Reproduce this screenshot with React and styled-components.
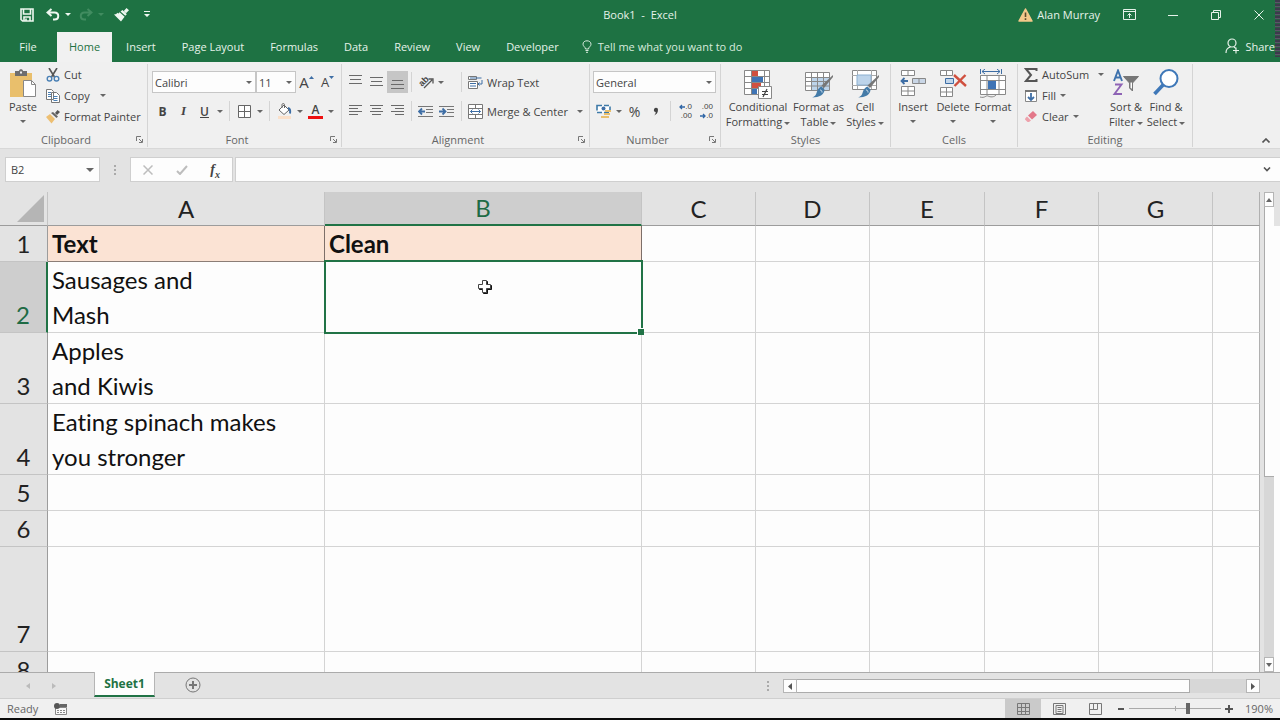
import { useState } from "react";
import styled, { createGlobalStyle } from "styled-components";


const App = () => {

    const [tab, setTab] = useState("Home");
    const [zoom, setZoom] = useState(190);

    return (
        <>
            <GlobalStyle />
            <Window>
                <Top>
                    <TitleBar />
                    <Tabs tab={tab} setTab={setTab} />
                </Top>
                <Ribbon />
                <FormulaBar />
                <Sheet />
                <SheetTabs />
                <StatusBar zoom={zoom} setZoom={setZoom} />
            </Window>
        </>
    )
}

// ---------- title and tabs ----------

const TitleBar = () => (
    <Title>
        <QuickAccess>
            <QuickButton aria-label="Save" $w={28}>
                <svg width="14" height="14" viewBox="0 0 14 14" fill="none" stroke="#eef7f0" strokeWidth="1.6">
                    <path d="M1 1h12v12H2.6L1 11.4zM3.5 1v5h7V1M4 13V9h6v4M6 10.5v2" />
                </svg>
            </QuickButton>
            <QuickButton aria-label="Undo" $w={34}>
                <svg width="14" height="13" viewBox="0 0 14 13" fill="none" stroke="#eef7f0" strokeWidth="2">
                    <path d="M5.5 1L1.5 4.5l4 3.5M2 4.500h6.500c5 0 5 7 0 7H7" />
                </svg>
                <Caret $color="#eef7f0" $gap={5} />
            </QuickButton>
            <QuickButton aria-label="Redo" $w={32} disabled>
                <svg width="14" height="13" viewBox="0 0 14 13" fill="none" stroke="#418c60" strokeWidth="2">
                    <path d="M8.500 1l4 3.500-4 3.500M12 4.500H5.500c-5 0-5 7 0 7H7" />
                </svg>
                <Caret $color="#418c60" $gap={5} />
            </QuickButton>
            <QuickButton aria-label="Format Painter" $w={28}>
                <svg width="15" height="14" viewBox="0 0 15 14" fill="#eef7f0">
                    <path d="M12.500 0L15 2.200l-3 3L9.800 3zM8.500 2l4.300 4.200-1.500 1.500L6.500 3.500zM5.600 4.300l5 4.500L7 13.500 0 6.500l2.500-.5.5-1.200 1.500.6z" />
                </svg>
            </QuickButton>
            <QuickButton aria-label="Customize Quick Access Toolbar" $w={24}>
                <svg width="6" height="7" viewBox="0 0 6 7" fill="#eef7f0"><path d="M0 0h6v1H0zM0 3h6L3 6z" /></svg>
            </QuickButton>
        </QuickAccess>
        <BookName>Book1&nbsp; -&nbsp; Excel</BookName>
        <TitleRight>
            <User>
                <svg width="15" height="14" viewBox="0 0 15 14">
                    <path d="M7.500 1L14 13H1z" fill="#f3c98b" stroke="#f3c98b" strokeWidth="1.500" strokeLinejoin="round" />
                    <path d="M7.500 4.500v4.500M7.500 10.300v1.700" stroke="#5b4a2b" strokeWidth="1.600" />
                </svg>
                Alan Murray
            </User>
            <WindowButton aria-label="Ribbon Display Options">
                <svg width="13" height="11" viewBox="0 0 13 11" fill="none" stroke="#e6f2ea">
                    <path d="M.5.5h12v10H.5zM.5 2.500h12M6.500 9V4.500M4.500 6.500l2-2 2 2" />
                </svg>
            </WindowButton>
            <WindowButton aria-label="Minimize">
                <svg width="10" height="10" viewBox="0 0 10 10" stroke="#e6f2ea"><path d="M0 5.500h10" /></svg>
            </WindowButton>
            <WindowButton aria-label="Restore">
                <svg width="10" height="10" viewBox="0 0 10 10" fill="none" stroke="#e6f2ea">
                    <path d="M.5 2.500h7v7h-7zM2.500 2.500v-2h7v7h-2" />
                </svg>
            </WindowButton>
            <WindowButton aria-label="Close">
                <svg width="10" height="10" viewBox="0 0 10 10" stroke="#e6f2ea"><path d="M.5.5l9 9M9.500.5l-9 9" /></svg>
            </WindowButton>
        </TitleRight>
    </Title>
)

const tabNames = ["File", "Home", "Insert", "Page Layout", "Formulas", "Data", "Review", "View", "Developer"];

const Tabs = ({ tab, setTab }) => (
    <TabBar>
        {tabNames.map((name) => (
            <TabButton key={name} $on={tab === name} $file={name === "File"} onClick={() => setTab(name)}>{name}</TabButton>
        ))}
        <TellMe>
            <svg width="10" height="13" viewBox="0 0 10 13" fill="none" stroke="#d8ebde">
                <path d="M3.500 9C3.500 7 1 6.500 1 4.200 1 2 2.800.8 5 .8s4 1.200 4 3.400C9 6.500 6.500 7 6.500 9zM3.500 10.500h3M4 12.300h2" />
            </svg>
            Tell me what you want to do
        </TellMe>
        <Share>
            <svg width="15" height="16" viewBox="0 0 15 16" fill="none" stroke="#e6f2ea" strokeWidth="1.200">
                <circle cx="7" cy="5" r="4" /><path d="M1 15c0-3.500 2-5.500 4.500-6M9 9l2 1.500M11 9.500v6M8 12.500h6" />
            </svg>
            Share
        </Share>
    </TabBar>
)

// ---------- ribbon ----------

const Ribbon = () => (
    <RibbonBar>
        <Group name="Clipboard" width={148} launcher pad={3}>
            <BigButton $w={40}>
                <svg width="28" height="30" viewBox="0 0 28 30">
                    <path d="M1 4h22v24H1z" fill="#e9bf6c" />
                    <path d="M6 2h4c0-2.500 4-2.500 4 0h4v5H6z" fill="#6e6e6e" /><path d="M11 2.500h2v2h-2z" fill="#eee" />
                    <path d="M14.500 11.500h8l4 4v12h-12z" fill="#fff" stroke="#888" /><path d="M22.500 11.500v4h4" fill="none" stroke="#888" />
                </svg>
                <span>Paste</span>
                <Caret />
            </BigButton>
            <Stack>
                <SmallButton>
                    <svg width="14" height="14" viewBox="0 0 14 14" fill="none">
                        <path d="M3 0l5.500 9M11 0L5.500 9" stroke="#555" strokeWidth="1.600" />
                        <circle cx="3.500" cy="10.700" r="2.300" stroke="#4a80b5" strokeWidth="1.400" /><circle cx="10.500" cy="10.700" r="2.300" stroke="#4a80b5" strokeWidth="1.400" />
                    </svg>
                    Cut
                </SmallButton>
                <SmallButton>
                    <svg width="14" height="14" viewBox="0 0 14 14" fill="#fff" stroke="#777">
                        <path d="M.5.500h5l2 2v8h-7zM5.500 3.500h5l3 3v7h-8z" />
                        <path d="M2 3.500h3M2 5.500h3M2 7.500h3M7.500 7.500h4M7.500 9.500h4M7.500 11.500h4" stroke="#4a80b5" />
                    </svg>
                    Copy
                    <Caret $gap={6} />
                </SmallButton>
                <SmallButton>
                    <svg width="14" height="14" viewBox="0 0 14 14">
                        <path d="M4 4l5 5-3.500 4.500L0 7z" fill="#edbf72" /><path d="M5 3l5.500 5L12 6.500 7 2z" fill="#666" /><path d="M11.500 0L14 2l-3 3-2-2z" fill="#555" />
                    </svg>
                    Format Painter
                </SmallButton>
            </Stack>
        </Group>

        <Group name="Font" width={194} launcher pad={4}>
            <Rows>
                <Row>
                    <Combo label="Font" value="Calibri" width={104} />
                    <Combo label="Font Size" value="11" width={40} />
                    <Tool aria-label="Increase Font Size"><FontSize $size={15}>A</FontSize><svg width="5" height="12" viewBox="0 0 5 12"><path d="M0 3l2.500-3L5 3z" fill="#3e6ea5" /></svg></Tool>
                    <Tool aria-label="Decrease Font Size"><FontSize $size={13}>A</FontSize><svg width="5" height="12" viewBox="0 0 5 12"><path d="M0 0h5L2.500 3z" fill="#3e6ea5" /></svg></Tool>
                </Row>
                <Row>
                    <Tool><b>B</b></Tool>
                    <Tool><Italic>I</Italic></Tool>
                    <Tool><Underlined>U</Underlined></Tool>
                    <Drop />
                    <Divider />
                    <Tool aria-label="Borders">
                        <svg width="13" height="13" viewBox="0 0 13 13" fill="#fff" stroke="#666"><path d="M.5.5h12v12H.5zM6.500.5v12M.5 6.500h12" /></svg>
                    </Tool>
                    <Drop />
                    <Divider />
                    <Tool aria-label="Fill Color">
                        <svg width="15" height="16" viewBox="0 0 15 16">
                            <path d="M2 7l5-5 5 5-5 4.500z" fill="#fff" stroke="#666" /><path d="M5 5V1.500C5 .3 7.500.3 7.500 1.500V5" fill="none" stroke="#666" />
                            <path d="M11 5c2.500.5 2.500 2.500 2 5.500" fill="none" stroke="#3e6ea5" strokeWidth="2" /><path d="M1 13h13v3H1z" fill="#fbe0c9" />
                        </svg>
                    </Tool>
                    <Drop />
                    <Tool aria-label="Font Color"><FontColor>A</FontColor></Tool>
                    <Drop />
                </Row>
            </Rows>
        </Group>

        <Group name="Alignment" width={248} launcher pad={3}>
            <Rows>
                <Row>
                    <Tool aria-label="Top Align"><Lines at={[1, 5, 9]} inset={[0, 1, 0]} /></Tool>
                    <Tool aria-label="Middle Align"><Lines at={[3, 7, 11]} inset={[0, 1, 0]} /></Tool>
                    <Tool aria-label="Bottom Align" $active><Lines at={[6, 10, 14]} inset={[1, 0, 0]} /></Tool>
                    <Divider $gap={3} />
                    <Cluster>
                        <Tool aria-label="Orientation">
                            <svg width="20" height="20" viewBox="0 0 20 20">
                                <text x="3" y="12" fontSize="9" fontWeight="600" fill="#444" fontFamily="Liberation Sans, sans-serif" transform="rotate(-45 8 10)">ab</text>
                                <path d="M8 16l8-8M12.500 7H17v4.500" fill="none" stroke="#555" strokeWidth="1.300" />
                            </svg>
                        </Tool>
                        <Drop />
                    </Cluster>
                    <Divider $gap={3} />
                    <SmallButton>
                        <svg width="15" height="15" viewBox="0 0 15 15" fill="none" stroke="#777">
                            <path d="M.5 1.500h8v3h-8zM.5 6.500h9v7h-9z" fill="#fff" />
                            <path d="M2 3h11.500M2 8.500h6M2 11h6" stroke="#3e6ea5" /><path d="M14 5v4h-4M11.500 7.500L10 9l1.500 1.500" stroke="#3e6ea5" />
                        </svg>
                        Wrap Text
                    </SmallButton>
                </Row>
                <Row>
                    <Tool aria-label="Align Left"><Lines at={[2, 5, 8, 11]} inset={[0, 0, 0, 0]} cut={[0, 4, 0, 4]} /></Tool>
                    <Tool aria-label="Center"><Lines at={[2, 5, 8, 11]} inset={[0, 2, 0, 2]} /></Tool>
                    <Tool aria-label="Align Right"><Lines at={[2, 5, 8, 11]} inset={[0, 4, 0, 4]} cut={[0, 0, 0, 0]} /></Tool>
                    <Divider $gap={3} />
                    <Cluster>
                        <Tool aria-label="Decrease Indent"><Indent d="M7 6.500H1M4 3.500l-3 3 3 3" /></Tool>
                        <Tool aria-label="Increase Indent"><Indent d="M0 6.500h6M3.500 3.500l3 3-3 3" /></Tool>
                    </Cluster>
                    <Divider $gap={3} />
                    <SmallButton>
                        <svg width="15" height="15" viewBox="0 0 15 15" fill="none" stroke="#777">
                            <path d="M.5.5h14v14H.5zM.5 4.500h14M.5 10.500h14M7.500.5v4M7.500 10.500v4" fill="#fff" />
                            <path d="M2.500 7.500h10M4.500 5.500l-2 2 2 2M10.500 5.500l2 2-2 2" stroke="#3e6ea5" />
                        </svg>
                        Merge &amp; Center
                        <Caret $gap={5} />
                    </SmallButton>
                </Row>
            </Rows>
        </Group>

        <Group name="Number" width={131} launcher pad={3}>
            <Rows>
                <Row><Combo label="Number Format" value="General" width={123} /></Row>
                <Row>
                    <Tool aria-label="Accounting Number Format">
                        <svg width="16" height="15" viewBox="0 0 16 15">
                            <path d="M1 1.500h13v7H1z" fill="#fff" stroke="#3e7aa8" strokeWidth="1.600" strokeDasharray="5 2" /><circle cx="7.500" cy="4.500" r="2" fill="#3e6ea5" />
                            <path d="M9 6h6v2H9zM8 9h6v2H8zM5 12h8v2H5z" fill="#e9bf6c" />
                        </svg>
                    </Tool>
                    <Drop />
                    <Tool aria-label="Percent Style"><Symbol>%</Symbol></Tool>
                    <Tool aria-label="Comma Style">
                        <svg width="6" height="9" viewBox="0 0 6 9"><path d="M1 2.500a2 2 0 1 1 4 .3C5 6 3.500 7.500 1 8.500c1.300-1.200 1.700-2.200 1.700-3.500A2 2 0 0 1 1 2.500z" fill="#444" /></svg>
                    </Tool>
                    <Divider />
                    <Tool aria-label="Increase Decimal">
                        <Decimal><span><SmallArrow d="M6 3H1M3 1L1 3l2 2" />.0</span><span>.00</span></Decimal>
                    </Tool>
                    <Tool aria-label="Decrease Decimal">
                        <Decimal><span>.00</span><span><SmallArrow d="M0 3h5M3 1l2 2-2 2" />.0</span></Decimal>
                    </Tool>
                </Row>
            </Rows>
        </Group>

        <Group name="Styles" width={170} pad={3}>
            <BigButton $w={68}>
                <svg width="30" height="30" viewBox="0 0 30 30">
                    <path d="M1.500 1.500h25v24h-25z" fill="#fff" /><path d="M9 1h6v6H9zM9 14h9v5H9z" fill="#d0503f" /><path d="M9 7h11v6H9zM9 20h5v5H9z" fill="#3f74b5" />
                    <path d="M1.500 1.500h25v24h-25zM8.500 1.500v24M21.500 1.500v24M1.500 7.500h25M1.500 13.500h25M1.500 19.500h25" fill="none" stroke="#888" />
                    <path d="M15.500 17.500h13v12h-13z" fill="#fff" stroke="#888" /><path d="M19 22.500h6M19 25.500h6M24 20l-4 8" stroke="#444" strokeWidth="1.200" />
                </svg>
                <span>Conditional</span>
                <span>Formatting<Caret $gap={2} /></span>
            </BigButton>
            <BigButton $w={53}>
                <svg width="30" height="30" viewBox="0 0 30 30">
                    <path d="M1.500 3.500h24v18h-24z" fill="#fff" stroke="#888" /><path d="M8 8h17v13H8z" fill="#bdd4ea" />
                    <path d="M7.500 3v18M13.500 3v18M19.500 3v18M2 8.500h23M2 12.500h23M2 17h23" stroke="#888" />
                    <Brush />
                </svg>
                <span>Format as</span>
                <span>Table<Caret $gap={2} /></span>
            </BigButton>
            <BigButton $w={40}>
                <svg width="30" height="30" viewBox="0 0 30 30">
                    <path d="M2.500 1.500h24v19h-24z" fill="#fff" stroke="#888" /><path d="M2 6.500h24M2 16.500h24M7.500 1v19M21.500 1v19" stroke="#aaa" /><path d="M7 6h14v10H7z" fill="#bdd4ea" stroke="#8db0d0" />
                    <Brush />
                </svg>
                <span>Cell</span>
                <span>Styles<Caret $gap={2} /></span>
            </BigButton>
        </Group>

        <Group name="Cells" width={127} pad={2}>
            <BigButton $w={40}>
                <svg width="28" height="30" viewBox="0 0 28 30" fill="#fff" stroke="#888">
                    <path d="M2.500 1.500h13v5h-13zM9 1.500v5M2.500 17.500h13v9h-13zM9 17.500v9M2.500 22h13" /><path d="M13.500 9.500h13v5h-13zM20 9.500v5" fill="#c9d6e6" />
                    <path d="M9 12H3M5.500 9L2.500 12l3 3" fill="none" stroke="#3e6ea5" strokeWidth="1.800" />
                </svg>
                <span>Insert</span>
                <Caret />
            </BigButton>
            <BigButton $w={40}>
                <svg width="28" height="30" viewBox="0 0 28 30" fill="#fff" stroke="#888">
                    <path d="M1.500 1.500h12v5h-12zM7.500 1.500v5M1.500 18.500h12v9h-12zM7.500 18.500v9M1.500 23h12" /><path d="M6.500 9.500h8v5h-8z" fill="#c3d6ea" stroke="#3e6ea5" />
                    <path d="M15 6l12 11M26.500 6L15.500 17" fill="none" stroke="#d0503f" strokeWidth="2.400" />
                </svg>
                <span>Delete</span>
                <Caret />
            </BigButton>
            <BigButton $w={40}>
                <svg width="28" height="30" viewBox="0 0 28 30" fill="#fff" stroke="#888">
                    <path d="M1.500 6.500h25v19h-25zM8 6.500v19M20 6.500v19M1.500 11.500h25M1.500 20.500h25" /><path d="M9 12h8v8H9z" fill="#3f74b5" stroke="none" />
                    <path d="M1.500 0v5M22.500 0v5M3 2.500h18M6 0L3 2.500 6 5M18 0l3 2.500L18 5" fill="none" stroke="#3e6ea5" /><path d="M1 28c5 1.500 6-2 8-1s6 2 9-2" fill="none" />
                </svg>
                <span>Format</span>
                <Caret />
            </BigButton>
        </Group>

        <Group name="Editing" width={175} pad={3}>
            <Stack $w={85}>
                <SmallButton>
                    <svg width="14" height="14" viewBox="0 0 14 14" fill="none" stroke="#555" strokeWidth="2"><path d="M12.500 3V1H2l5 6-5 6h10.500v-2" /></svg>
                    AutoSum
                    <Caret $gap={5} />
                </SmallButton>
                <SmallButton>
                    <svg width="14" height="14" viewBox="0 0 14 14"><path d="M1.500 1.500h11v11h-11z" fill="#fff" stroke="#888" /><path d="M1 1h12v2H1z" fill="#777" /><path d="M7 4v7M4 8l3 3 3-3" fill="none" stroke="#3e6ea5" strokeWidth="1.800" /></svg>
                    Fill
                    <Caret />
                </SmallButton>
                <SmallButton>
                    <svg width="14" height="14" viewBox="0 0 14 14"><path d="M9 1l4 4-5 4.500-4-4z" fill="#e3788a" /><path d="M3 6.500l4 4L5 12H3.500L1 9.500V8.500z" fill="#eea2ac" /></svg>
                    Clear
                    <Caret />
                </SmallButton>
            </Stack>
            <BigButton $w={40}>
                <svg width="30" height="30" viewBox="0 0 30 30" fill="none" strokeWidth="1.900">
                    <path d="M3 12L7 1.500 11 12M4.500 8.500h5" stroke="#3e72ad" /><path d="M4 15.500h6.500L3.500 25H11" stroke="#8e63b5" />
                    <path d="M12.500 7.500h15L21.500 14v8l-3-3v-5z" fill="#777" stroke="#777" strokeWidth="1" /><path d="M19.500 13.500v5l1.500 1.500v-6.500z" fill="#fff" />
                </svg>
                <span>Sort &amp;</span>
                <span>Filter<Caret $gap={2} /></span>
            </BigButton>
            <BigButton $w={40}>
                <svg width="28" height="30" viewBox="0 0 28 30" fill="none" stroke="#3f78b8">
                    <circle cx="17" cy="9.500" r="8.500" fill="#fff" strokeWidth="2" /><path d="M11 16l-8.500 9" strokeWidth="3.600" />
                </svg>
                <span>Find &amp;</span>
                <span>Select<Caret $gap={2} /></span>
            </BigButton>
        </Group>
        <Collapse aria-label="Collapse the Ribbon">
            <svg width="8" height="5" viewBox="0 0 8 5" fill="none" stroke="#555" strokeWidth="1.600"><path d="M.5 4.500L4 1l3.500 3.500" /></svg>
        </Collapse>
    </RibbonBar>
)

const Group = ({ name, width, pad, launcher, children }) => (
    <GroupBox $w={width}>
        <GroupBody $pad={pad}>{children}</GroupBody>
        <GroupFoot>
            <GroupName>{name}</GroupName>
            {launcher && (
                <Launcher aria-label={name + " settings"}>
                    <svg width="7" height="7" viewBox="0 0 7 7" fill="none" stroke="#777"><path d="M.5 5V.5H5M3 3l3 3M6.500 3v3.500H3" /></svg>
                </Launcher>
            )}
        </GroupFoot>
    </GroupBox>
)

const Combo = ({ label, value, width }) => (
    <ComboBox $w={width}>
        <select aria-label={label} defaultValue={value}><option>{value}</option></select>
        <Caret />
    </ComboBox>
)

const Lines = ({ at, inset, cut }) => (
    <svg width="13" height="16" viewBox="0 0 13 16" stroke="#6a6a6a">
        {at.map((y, i) => <path key={y} d={`M${inset[i]} ${y + .5}H${13 - (cut ? cut[i] : inset[i])}`} />)}
    </svg>
)

const Indent = ({ d }) => (
    <svg width="15" height="13" viewBox="0 0 15 13" fill="none">
        <path d="M0 1.500h15M8 4.500h7M8 7.500h7M0 11.500h15" stroke="#777" />
        <path d={d} stroke="#3e6ea5" strokeWidth="1.800" />
    </svg>
)

const SmallArrow = ({ d }) => (
    <svg width="6" height="6" viewBox="0 0 6 6" fill="none" stroke="#2f65a5" strokeWidth="1.300"><path d={d} /></svg>
)

const Brush = () => (
    <g>
        <path d="M29 8l-9 11-2.500-2.500L29 6z" fill="#777" />
        <path d="M17.500 17.500l3 3c0 5-5 8-12.500 8 4-1.500 4-3 5-6 .8-2.500 2.300-4 4.500-5z" fill="#447ba8" />
        <path d="M16 21c1.500 0 2 1 2 2.500" fill="none" stroke="#d5e4f0" />
    </g>
)

// ---------- formula bar and grid ----------

const FormulaBar = () => (
    <Formula>
        <NameBox>
            <input aria-label="Name Box" defaultValue="B2" />
            <Caret $big />
        </NameBox>
        <Dots />
        <FormulaButtons>
            <button aria-label="Cancel"><svg width="10" height="10" viewBox="0 0 10 10" stroke="#bdbdbd" strokeWidth="1.500"><path d="M.5.5l9 9M9.500.5l-9 9" /></svg></button>
            <button aria-label="Enter"><svg width="12" height="10" viewBox="0 0 12 10" fill="none" stroke="#bdbdbd" strokeWidth="2"><path d="M1 6l3 3 7-8" /></svg></button>
            <button aria-label="Insert Function"><Fx>f<sub>x</sub></Fx></button>
        </FormulaButtons>
        <FormulaInput>
            <input aria-label="Formula" />
            <svg width="8" height="5" viewBox="0 0 8 5" fill="none" stroke="#555" strokeWidth="1.600"><path d="M1 .5L4 3.500 7 .5" /></svg>
        </FormulaInput>
    </Formula>
)

const columns = ["A", "B", "C", "D", "E", "F", "G", ""];
const rows = [
    { a: "Text", b: "Clean", h: 36, head: true },
    { a: "Sausages and\nMash", h: 71 },
    { a: "Apples\nand Kiwis", h: 71 },
    { a: "Eating spinach makes\nyou stronger", h: 71 },
    { h: 36 },
    { h: 36 },
    { h: 105 },
    { h: 36 },
];

const Sheet = () => (
    <SheetArea>
        <Viewport>
            <Grid>
                <colgroup>
                    <Col $w={48} /><Col $w={277} /><Col $w={317} />
                    <Col $w={114} /><Col $w={114} /><Col $w={115} /><Col $w={114} /><Col $w={114} /><Col />
                </colgroup>
                <thead>
                    <tr>
                        <Corner><svg width="27" height="27" viewBox="0 0 27 27"><path d="M27 0v27H0z" fill="#b5b5b5" /></svg></Corner>
                        {columns.map((c) => <ColHead key={c} scope="col" $on={c === "B"}>{c}</ColHead>)}
                    </tr>
                </thead>
                <tbody>
                    {rows.map((r, i) => (
                        <GridRow key={i} $h={r.h}>
                            <RowHead scope="row" $on={i === 1}>{i + 1}</RowHead>
                            <Cell $head={r.head}>{r.a}</Cell>
                            {i === 1 ? (
                                <Cell>
                                    <Selection>
                                        <svg width="14" height="14" viewBox="0 0 14 14">
                                            <path d="M5.500 1.500h4v4h4v4h-4v4h-4v-4h-4v-4h4z" fill="#111" stroke="#111" />
                                            <path d="M4.500.5h4v4h4v4h-4v4h-4v-4h-4v-4h4z" fill="#fff" stroke="#444" />
                                        </svg>
                                    </Selection>
                                </Cell>
                            ) : <Cell $head={r.head}>{r.b}</Cell>}
                            <Cell /><Cell /><Cell /><Cell /><Cell /><Cell />
                        </GridRow>
                    ))}
                </tbody>
            </Grid>
        </Viewport>
        <VScroll>
            <ScrollButton aria-label="Scroll up"><svg width="6" height="4" viewBox="0 0 6 4"><path d="M0 4l3-4 3 4z" fill="#666" /></svg></ScrollButton>
            <VThumb />
            <Track $part={4} />
            <ScrollButton aria-label="Scroll down"><svg width="6" height="4" viewBox="0 0 6 4"><path d="M0 0h6L3 4z" fill="#666" /></svg></ScrollButton>
        </VScroll>
        <Edge />
    </SheetArea>
)

const SheetTabs = () => (
    <SheetTabBar>
        <SheetNav>
            <button aria-label="Previous sheet"><svg width="4" height="6" viewBox="0 0 4 6"><path d="M4 0v6L0 3z" fill="#bbb" /></svg></button>
            <button aria-label="Next sheet"><svg width="4" height="6" viewBox="0 0 4 6"><path d="M0 0v6l4-3z" fill="#bbb" /></svg></button>
        </SheetNav>
        <SheetTab>Sheet1</SheetTab>
        <AddSheet aria-label="New sheet">
            <svg width="16" height="16" viewBox="0 0 16 16" fill="none" stroke="#777"><circle cx="8" cy="8" r="7" /><path d="M8 4v8M4 8h8" strokeWidth="2" /></svg>
        </AddSheet>
        <Dots />
        <HScroll>
            <ScrollButton $h aria-label="Scroll left"><svg width="4" height="7" viewBox="0 0 4 7"><path d="M4 0v7L0 3.500z" fill="#555" /></svg></ScrollButton>
            <HThumb />
            <Track $part={1} />
            <ScrollButton $h aria-label="Scroll right"><svg width="4" height="7" viewBox="0 0 4 7"><path d="M0 0v7l4-3.500z" fill="#555" /></svg></ScrollButton>
        </HScroll>
    </SheetTabBar>
)

const StatusBar = ({ zoom, setZoom }) => (
    <Status>
        <Ready>Ready</Ready>
        <svg width="13" height="12" viewBox="0 0 13 12">
            <path d="M1.500 4.500h11v7h-11z" fill="#f8f8f8" stroke="#888" /><path d="M6 1h7v3H6z" fill="#666" /><circle cx="3" cy="3" r="3" fill="#555" />
            <path d="M3 7.500h8M3 9.500h8" stroke="#888" strokeDasharray="2 1" />
        </svg>
        <Views>
            <ViewButton $on aria-label="Normal"><svg width="13" height="12" viewBox="0 0 13 12" fill="none" stroke="#777"><path d="M.5.5h12v11H.5zM4.500.5v11M8.500.5v11M.5 4.500h12M.5 8.500h12" /></svg></ViewButton>
            <ViewButton aria-label="Page Layout"><svg width="13" height="12" viewBox="0 0 13 12" fill="none" stroke="#777"><path d="M.5.5h12v11H.5zM3 2.500h7v8H3zM4.500 4.500h4M4.500 6.500h4M4.500 8.500h4" /></svg></ViewButton>
            <ViewButton aria-label="Page Break Preview"><svg width="13" height="12" viewBox="0 0 13 12" fill="none" stroke="#777"><path d="M.5 11.500V.5h12v11zM4.500.5v6M8.500.5v6M.5 6.500h8" /></svg></ViewButton>
        </Views>
        <ZoomButton aria-label="Zoom out" onClick={() => setZoom(zoom - 10)}><svg width="6" height="8" viewBox="0 0 6 8"><path d="M0 4h6" stroke="#555" strokeWidth="2" /></svg></ZoomButton>
        <ZoomSlider type="range" aria-label="Zoom" min="-200" max="400" value={zoom} onChange={(e) => setZoom(Number(e.target.value))} />
        <ZoomButton aria-label="Zoom in" onClick={() => setZoom(zoom + 10)}><svg width="8" height="8" viewBox="0 0 8 8"><path d="M0 4h8M4 0v8" stroke="#555" strokeWidth="2" /></svg></ZoomButton>
        <ZoomValue>{zoom}%</ZoomValue>
    </Status>
)


const GlobalStyle = createGlobalStyle`
    *{
        box-sizing: border-box;
    }
    body{
        margin: 0;
        background-color: #e3e3e3;
        font-family: "Open Sans", "Noto Sans", sans-serif;
        font-size: 11px;
        color: #444;
    }
    button, input, select{
        font: inherit;
        color: inherit;
        border: none;
        padding: 0;
        margin: 0;
        background: none;
        outline: none;
    }
    svg{
        display: block;
        flex-shrink: 0;
    }
`
const Window = styled.div`
    height: 100vh;
    display: flex;
    flex-direction: column;
    overflow: hidden;
    border-bottom: 2px solid #0a0a0a;
`
const Top = styled.div`
    position: relative;
    flex-shrink: 0;
    background-color: #1e7243;
    color: #e6f2ea;

    /* striped sliver of the desktop along the window's right edge */
    &::after{
        content: "";
        position: absolute;
        top: 0;
        right: 0;
        width: 5px;
        height: 57px;
        background: repeating-linear-gradient(#3d3a4c 0 2px, #5b5468 2px 3px, #2c5a44 3px 4px);
    }
`
const Caret = styled.i`
    display: inline-block;
    flex-shrink: 0;
    vertical-align: middle;
    margin-left: ${(p) => p.$gap || 0}px;
    border: solid transparent;
    border-width: ${(p) => (p.$big ? "4px 4px 0" : "3px 3px 0")};
    border-top-color: ${(p) => p.$color || "#666"};
`
const Title = styled.header`
    height: 32px;
    display: grid;
    grid-template-columns: 1fr auto 1fr;
    align-items: center;
    padding-bottom: 3px;
`
const QuickAccess = styled.div`
    display: flex;
    padding-left: 13px;
`
const QuickButton = styled.button`
    width: ${(p) => p.$w}px;
    height: 28px;
    display: flex;
    align-items: center;
    justify-content: center;
`
const BookName = styled.div`
    white-space: pre;
`
const TitleRight = styled.div`
    display: flex;
    justify-content: flex-end;
`
const User = styled.div`
    display: flex;
    align-items: center;
    gap: 4px;
    padding-right: 8px;
`
const WindowButton = styled.button`
    width: 43px;
    height: 28px;
    display: flex;
    align-items: center;
    justify-content: center;
`
const TabBar = styled.nav`
    height: 30px;
    display: flex;
`
const TabButton = styled.button`
    width: ${(p) => (p.$file ? "56px" : "auto")};
    padding: 0 ${(p) => (p.$file ? 0 : 12)}px 2px;
    margin-right: ${(p) => (p.$file ? 1 : 2)}px;
    background-color: ${(p) => (p.$on ? "#f1f1f1" : "transparent")};
    color: ${(p) => (p.$on ? "#1e7243" : "inherit")};
`
const TellMe = styled.button`
    display: flex;
    align-items: center;
    gap: 6px;
    padding: 0 0 2px 9px;
    color: #d8ebde;
`
const Share = styled.button`
    display: flex;
    align-items: center;
    gap: 5px;
    margin-left: auto;
    padding: 0 5px 2px 0;
`
const RibbonBar = styled.div`
    height: 87px;
    flex-shrink: 0;
    display: flex;
    padding: 2px 0 1px;
    background-color: #f0f0f0;
    border-bottom: 1px solid #d8d8d8;
`
const GroupBox = styled.section`
    width: ${(p) => p.$w}px;
    flex-shrink: 0;
    display: flex;
    flex-direction: column;
    border-right: 1px solid #d4d4d4;
`
const GroupBody = styled.div`
    flex: 1;
    display: flex;
    padding-left: ${(p) => p.$pad}px;
`
const GroupFoot = styled.div`
    height: 15px;
    display: flex;
    align-items: center;
`
const GroupName = styled.div`
    flex: 1;
    text-align: center;
    color: #666;
`
const Launcher = styled.button`
    width: 15px;
    height: 15px;
    display: flex;
    align-items: center;
    justify-content: center;
`
const BigButton = styled.button`
    width: ${(p) => p.$w}px;
    display: flex;
    flex-direction: column;
    align-items: center;
    padding-top: 5px;
    line-height: 15px;
    white-space: nowrap;

    > ${Caret}{
        margin-top: 6px;
    }
`
const Stack = styled.div`
    width: ${(p) => (p.$w ? p.$w + "px" : "auto")};
    display: flex;
    flex-direction: column;
`
const SmallButton = styled.button`
    height: 21px;
    display: flex;
    align-items: center;
    gap: 4px;
    padding: 0 3px;
    white-space: nowrap;
`
const Rows = styled.div`
    display: flex;
    flex-direction: column;
    gap: 1px;
    padding-top: 4px;
`
const Row = styled.div`
    height: 28px;
    display: flex;
    align-items: center;
`
const Cluster = styled.div`
    width: 43px;
    display: flex;
`
const Tool = styled.button`
    width: 21px;
    height: 22px;
    display: flex;
    align-items: center;
    justify-content: center;
    font-size: 12px;
    background-color: ${(p) => (p.$active ? "#c6c6c6" : "transparent")};
`
const Drop = styled.button.attrs({ "aria-label": "More", children: <Caret /> })`
    width: 10px;
    height: 22px;
    display: flex;
    align-items: center;
    justify-content: center;
`
const Divider = styled.div`
    width: 1px;
    height: 20px;
    margin: 0 ${(p) => p.$gap || 4}px;
    background-color: #d4d4d4;
`
const FontSize = styled.span`
    font-size: ${(p) => p.$size}px;
`
const Italic = styled.i`
    font-family: "Liberation Serif", serif;
    font-weight: bold;
    font-size: 13px;
`
const Underlined = styled.span`
    text-decoration: underline;
    font-weight: 600;
`
const FontColor = styled.span`
    width: 15px;
    height: 16px;
    line-height: 13px;
    font-weight: 600;
    border-bottom: 3px solid #ee1111;
`
const Symbol = styled.span`
    font-size: 14px;
`
const Decimal = styled.span`
    display: flex;
    flex-direction: column;
    align-items: flex-end;
    font-family: "Liberation Sans", sans-serif;
    font-size: 8px;
    line-height: 9px;

    span{
        display: flex;
        align-items: center;
    }
`
const ComboBox = styled.label`
    width: ${(p) => p.$w}px;
    height: 22px;
    display: grid;
    align-items: center;
    background-color: #fdfdfd;
    border: 1px solid #c6c6c6;

    select, ${Caret}{
        grid-area: 1 / 1;
    }
    select{
        appearance: none;
        padding-left: 2px;
    }
    ${Caret}{
        justify-self: end;
        margin-right: 3px;
        pointer-events: none;
    }
`
const Collapse = styled.button`
    margin-left: auto;
    align-self: flex-end;
    padding: 5px 10px 4px;
`
const Formula = styled.div`
    height: 43px;
    flex-shrink: 0;
    display: flex;
    align-items: flex-start;
    padding: 8px 0 0 5px;
`
const NameBox = styled.label`
    width: 95px;
    height: 25px;
    display: flex;
    align-items: center;
    padding: 0 5px;
    background-color: #fdfdfd;
    border: 1px solid #cfcfcf;

    input{
        min-width: 0;
        flex: 1;
    }
`
const Dots = styled.div`
    width: 2px;
    height: 10px;
    margin: 8px 14px 0;
    background: repeating-linear-gradient(#aaa 0 2px, transparent 2px 4px);
`
const FormulaButtons = styled.div`
    width: 103px;
    height: 25px;
    display: flex;
    background-color: #fdfdfd;
    border: 1px solid #cfcfcf;

    button{
        flex: 1;
        display: flex;
        align-items: center;
        justify-content: center;
    }
`
const Fx = styled.i`
    font-family: "Liberation Serif", serif;
    font-weight: bold;
    font-size: 14px;
    line-height: 14px;
    sub{
        font-size: 10px;
        line-height: 0;
    }
`
const FormulaInput = styled.label`
    flex: 1;
    height: 25px;
    display: flex;
    align-items: center;
    margin-left: 2px;
    padding-right: 9px;
    background-color: #fdfdfd;
    border: 1px solid #cfcfcf;
    border-right: none;

    input{
        flex: 1;
    }
`
const SheetArea = styled.main`
    flex: 1;
    min-height: 0;
    display: flex;
    border-bottom: 1px solid #ababab;
`
const Viewport = styled.div`
    flex: 1;
    overflow: hidden;
`
const Grid = styled.table`
    width: 100%;
    table-layout: fixed;
    border-collapse: separate;
    border-spacing: 0;
    font-family: Lato, "Open Sans", sans-serif;
    font-size: 24px;
    font-variant-ligatures: none;
    line-height: 35px;
    color: #111;

    th, td{
        padding: 0;
    }
    tr > :last-child{
        border-right-color: #b0b0b0;
    }
`
const Col = styled.col`
    width: ${(p) => (p.$w ? p.$w + "px" : "auto")};
`
const Corner = styled.td`
    height: 34px;
    border-right: 1px solid #c4c4c4;
    border-bottom: 1px solid #9c9c9c;
    svg{
        margin-left: 17px;
    }
`
const ColHead = styled.th`
    font-weight: normal;
    line-height: 32px;
    color: ${(p) => (p.$on ? "#1e6b45" : "#222")};
    background-color: ${(p) => (p.$on ? "#cecece" : "#e3e3e3")};
    border-right: 1px solid #c4c4c4;
    border-bottom: ${(p) => (p.$on ? "2px solid #217346" : "1px solid #9c9c9c")};
`
const GridRow = styled.tr`
    height: ${(p) => p.$h}px;
`
const RowHead = styled.th`
    font-weight: normal;
    vertical-align: bottom;
    color: ${(p) => (p.$on ? "#1e6b45" : "#222")};
    background-color: ${(p) => (p.$on ? "#cecece" : "#e3e3e3")};
    border-right: ${(p) => (p.$on ? "2px solid #217346" : "1px solid #9c9c9c")};
    border-bottom: 1px solid #c4c4c4;
`
const Cell = styled.td`
    position: relative;
    white-space: pre;
    vertical-align: bottom;
    font-weight: ${(p) => (p.$head ? "bold" : "normal")};
    background-color: ${(p) => (p.$head ? "#fbe3d4" : "#fdfdfd")};
    border-right: 1px solid ${(p) => (p.$head ? "#7d6f69" : "#d4d4d4")};
    border-bottom: 1px solid ${(p) => (p.$head ? "#8b7d76" : "#d4d4d4")};

    && {
        padding-left: 4px;
    }
`
const Selection = styled.div`
    position: absolute;
    z-index: 1;
    inset: -2px -2px -2px -1px;
    display: flex;
    justify-content: center;
    padding: 18px 0 0 2px;
    border: 2px solid #217346;

    &::after{
        content: "";
        position: absolute;
        right: -3px;
        bottom: -3px;
        width: 6px;
        height: 6px;
        background-color: #217346;
        border: solid #fdfdfd;
        border-width: 1px 0 0 1px;
    }
`
const VScroll = styled.div`
    width: 14px;
    display: flex;
    flex-direction: column;
    padding-left: 4px;
`
const ScrollButton = styled.button`
    width: ${(p) => (p.$h ? "14px" : "auto")};
    height: ${(p) => (p.$h ? "auto" : "15px")};
    flex-shrink: 0;
    display: flex;
    align-items: center;
    justify-content: center;
    background-color: #fdfdfd;
    border: 1px solid #b5b5b5;
`
const VThumb = styled.div`
    flex: 6;
    background-color: #fdfdfd;
    border: 1px solid #ababab;
    border-top: none;
    border-right: none;
`
const Track = styled.div`
    flex: ${(p) => p.$part};
    background-color: #d7d7d7;
`
const Edge = styled.div`
    width: 6px;
    margin-top: 34px;
    background-color: #fdfdfd;
`
const SheetTabBar = styled.footer`
    height: 25px;
    flex-shrink: 0;
    display: flex;
    align-items: flex-start;
`
const SheetNav = styled.div`
    width: 94px;
    height: 25px;
    display: flex;
    align-items: center;
    gap: 22px;
    padding-left: 26px;
`
const SheetTab = styled.button`
    width: 61px;
    height: 25px;
    margin-top: -1px;
    font-size: 12px;
    line-height: 22px;
    font-weight: bold;
    color: #1e7243;
    background-color: #fdfdfd;
    border: solid #b5b5b5;
    border-width: 0 1px;
    border-bottom: 2px solid #217346;
`
const AddSheet = styled.button`
    margin: 4px auto 0 30px;
`
const HScroll = styled.div`
    width: 477px;
    height: 14px;
    display: flex;
    margin: 6px 20px 0 0;
`
const HThumb = styled.div`
    flex: 7;
    background-color: #fdfdfd;
    border: 1px solid #ababab;
    border-left: none;
`
const Status = styled.footer`
    height: 20px;
    flex-shrink: 0;
    display: flex;
    align-items: center;
    padding: 0 7px;
    background-color: #f0f0f0;
    border-top: 1px solid #cfcfcf;
    color: #666;
`
const Ready = styled.span`
    width: 47px;
`
const Views = styled.div`
    display: flex;
    height: 19px;
    margin-left: auto;
`
const ViewButton = styled.button`
    width: 36px;
    display: flex;
    align-items: center;
    justify-content: center;
    background-color: ${(p) => (p.$on ? "#cacaca" : "transparent")};
`
const ZoomButton = styled.button`
    width: 16px;
    display: flex;
    justify-content: center;
`
const ZoomSlider = styled.input`
    appearance: none;
    width: 92px;
    height: 12px;
    background:
        linear-gradient(#aaa, #aaa) center / 1px 5px no-repeat,
        linear-gradient(#aaa, #aaa) center / 100% 1px no-repeat;

    &::-webkit-slider-thumb{
        appearance: none;
        width: 4px;
        height: 11px;
        background-color: #666;
    }
`
const ZoomValue = styled.span`
    width: 36px;
    text-align: right;
`

export default App;
